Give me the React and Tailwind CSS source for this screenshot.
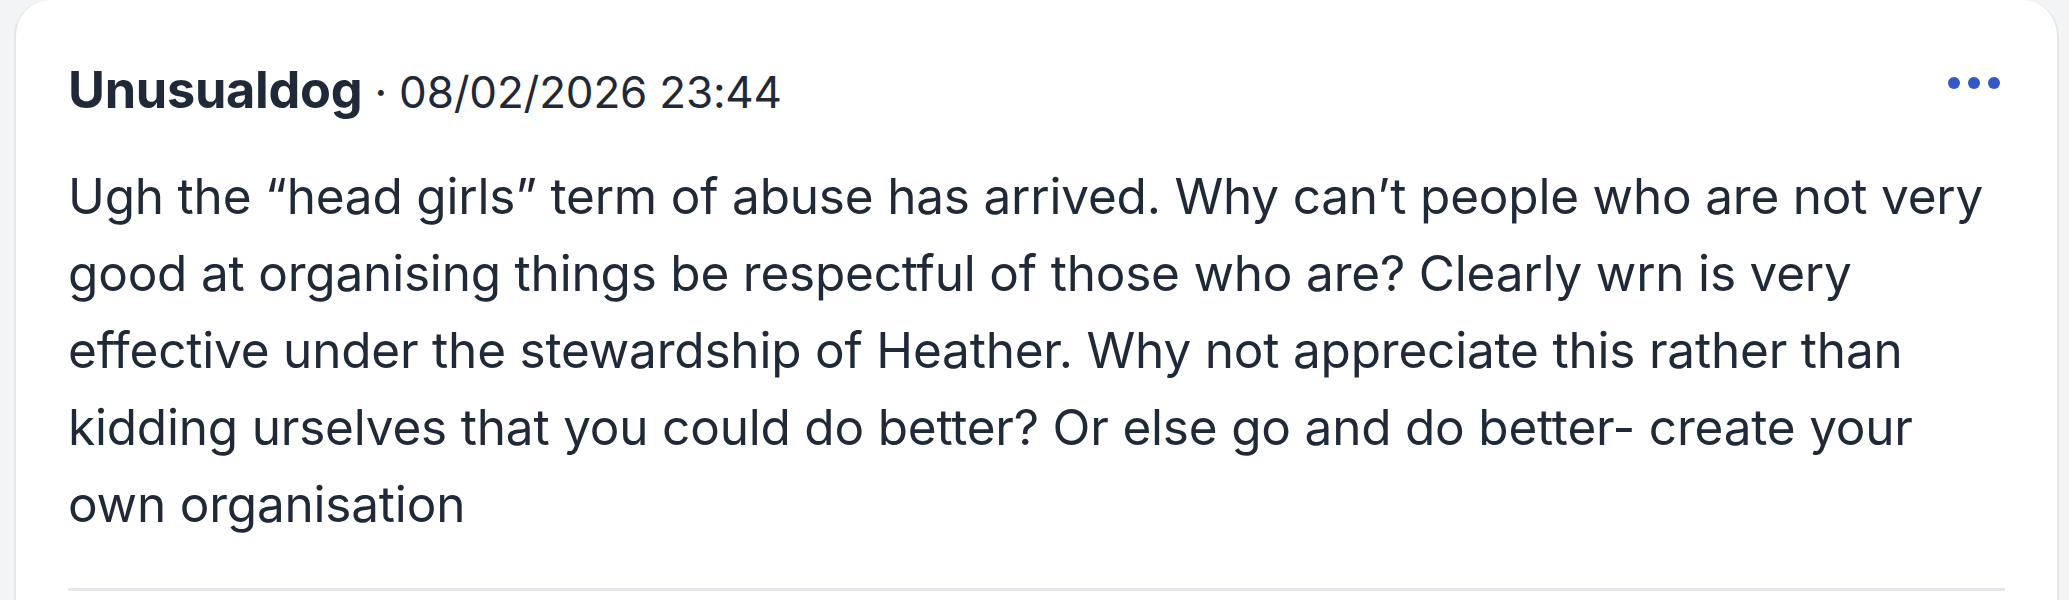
import React from "react";

const Post = () => {
  return (
    <div className="min-h-screen bg-[#f3f4f6] pl-[14px] pr-[10px]">
      {/* Card */}
      <div className="bg-white border-2 border-t-0 border-[#e5e7eb] rounded-b-none rounded-t-[36px] px-[52px] pt-[60px] pb-[40px] text-[#1f2937] font-['Inter',sans-serif]">
        <div className="flex justify-between items-start">
          <div className="text-[50.5px] leading-[60px] whitespace-nowrap">
            <span className="font-bold tracking-[-0.3px]">Unusualdog</span>
            <span className="font-normal text-[44px] tracking-[-0.2px]"> · 08/02/2026 23:44</span>
          </div>
          <button className="flex items-center gap-[8px] mt-[17px] mr-[5px]">
            <span className="w-[12px] h-[12px] rounded-full bg-[#3358c8]"></span>
            <span className="w-[12px] h-[12px] rounded-full bg-[#3358c8]"></span>
            <span className="w-[12px] h-[12px] rounded-full bg-[#3358c8]"></span>
          </button>
        </div>
        <p className="mt-[36px] text-[49.5px] leading-[77px] tracking-[-0.2px]">
          Ugh the “head girls” term of abuse has arrived. Why can’t people who are not very good at organising things be respectful of those who are? Clearly wrn is very effective under the stewardship of Heather. Why not appreciate this rather than kidding urselves that you could do better? Or else go and do better- create your own organisation
        </p>
        <div className="mt-[45px] h-[3px] bg-[#e5e7eb]"></div>
      </div>
    </div>
  );
};

export default function App() {
  return <Post />;
}
